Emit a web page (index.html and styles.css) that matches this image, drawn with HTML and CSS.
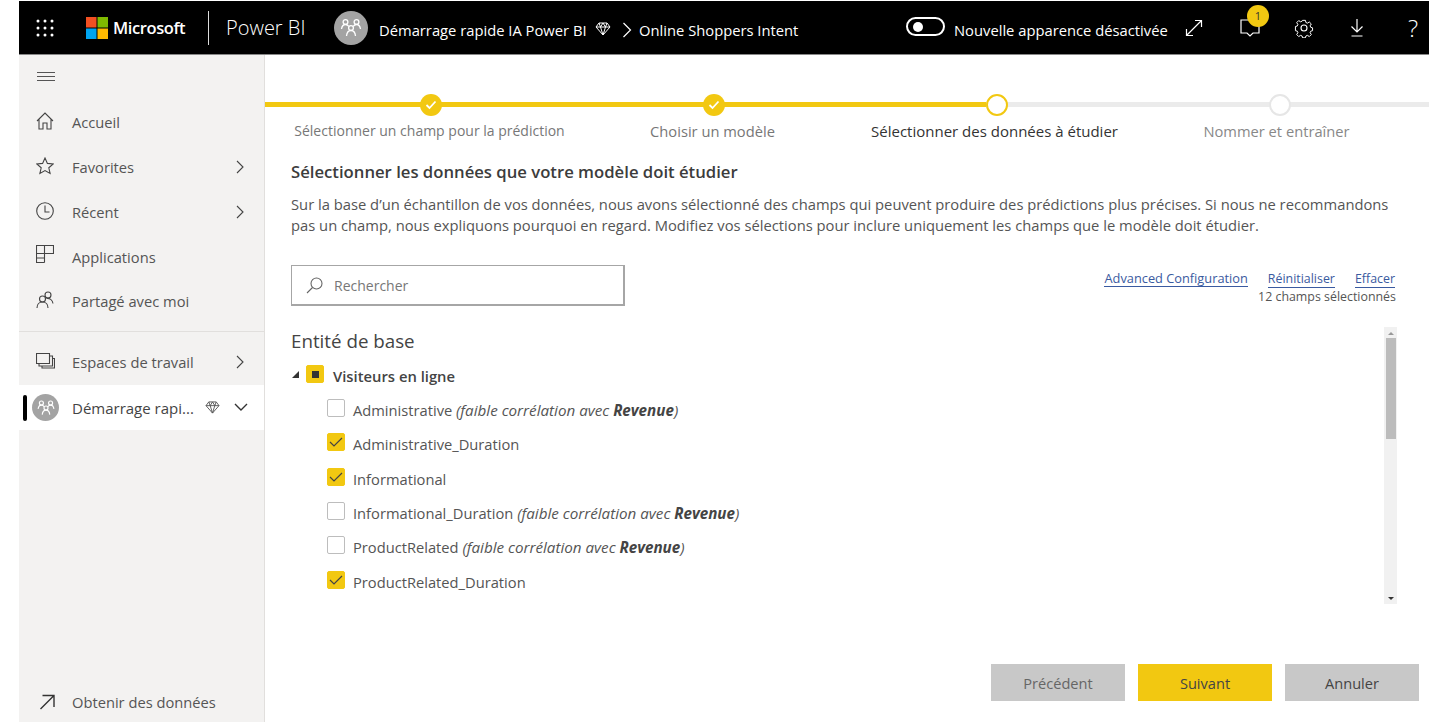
FILE: index.html
```html
<!DOCTYPE html>
<html lang="fr">
<head>
<meta charset="utf-8">
<title>Power BI</title>
<link rel="stylesheet" href="styles.css">
</head>
<body>
<div class="app">
  <header class="topbar">
    <svg class="waffle" width="18" height="18" viewBox="0 0 18 18" fill="#fff"><circle cx="2" cy="2" r="1.5"/><circle cx="9" cy="2" r="1.5"/><circle cx="16" cy="2" r="1.5"/><circle cx="2" cy="9" r="1.5"/><circle cx="9" cy="9" r="1.5"/><circle cx="16" cy="9" r="1.5"/><circle cx="2" cy="16" r="1.5"/><circle cx="9" cy="16" r="1.5"/><circle cx="16" cy="16" r="1.5"/></svg>
    <svg class="mslogo" width="22" height="22" viewBox="0 0 22 22"><rect width="10.5" height="10.5" fill="#f25022"/><rect x="11.5" width="10.5" height="10.5" fill="#7fba00"/><rect y="11.5" width="10.5" height="10.5" fill="#00a4ef"/><rect x="11.5" y="11.5" width="10.5" height="10.5" fill="#ffb900"/></svg>
    <span class="msname">Microsoft</span>
    <span class="tsep"></span>
    <span class="pbi">Power BI</span>
    <span class="avatar big">
      <svg width="24" height="24" viewBox="0 0 24 24" fill="none" stroke="#fff" stroke-width="1.3"><circle cx="6.5" cy="6" r="2.4"/><circle cx="17.5" cy="6" r="2.4"/><circle cx="12" cy="12" r="2.4"/><path d="M2.5 13c.5-3 2-4.500 4-4.500 1.500 0 2.500.7 3.300 2M21.500 13c-.5-3-2-4.500-4-4.500-1.500 0-2.500.7-3.300 2M7.500 20c.3-3 2-5.500 4.500-5.500s4.200 2.500 4.500 5.500"/></svg>
    </span>
    <span class="crumb c1">Démarrage rapide IA Power BI</span>
    <svg class="dia" width="16" height="14" viewBox="0 0 16 14" fill="none" stroke="#fff" stroke-width="1"><path d="M4 1h8l3 4-7 8-7-8zM1 5h14M5.500 5L8 13l2.500-8M4 1l1.500 4L8 1l2.500 4L12 1"/></svg>
    <svg class="crumbchev" width="10" height="16" viewBox="0 0 10 16" fill="none" stroke="#fff" stroke-width="1.2"><path d="M1.500 1l7 7-7 7"/></svg>
    <span class="crumb c2">Online Shoppers Intent</span>
    <span class="toggle"><span class="knob"></span></span>
    <span class="crumb c3">Nouvelle apparence désactivée</span>
    <svg class="ic-expand" width="18" height="18" viewBox="0 0 18 18" fill="none" stroke="#fff" stroke-width="1.2"><path d="M1.500 16.500L16.500 1.500M10 1.500h6.500V8M1.500 10v6.500H8"/></svg>
    <span class="comment">
      <svg width="20" height="20" viewBox="0 0 20 20" fill="none" stroke="#fff" stroke-width="1.2"><path d="M1 2h18v13h-6l-3 3-3-3H1z"/></svg>
      <span class="badge">1</span>
    </span>
    <svg class="ic-gear" width="20" height="20" viewBox="0 0 20 20" fill="none" stroke="#fff" stroke-width="1.1"><circle cx="10" cy="10" r="3"/><path d="M8.400 1.500h3.200l.5 2.400 1.700.7 2.100-1.300 2.200 2.200-1.300 2.100.7 1.700 2 .5v3.200l-2 .5-.7 1.700 1.300 2.100-2.200 2.200-2.100-1.300-1.700.7-.5 2h-3.200l-.5-2-1.700-.7-2.100 1.300-2.200-2.200 1.300-2.100-.7-1.700-2-.5V8.300l2-.5.7-1.700-1.300-2.100 2.200-2.200 2.100 1.300 1.700-.7z" transform="translate(1 1) scale(.9)"/></svg>
    <svg class="ic-down" width="14" height="18" viewBox="0 0 14 18" fill="none" stroke="#fff" stroke-width="1.2"><path d="M7 0v13M1.500 7.500L7 13l5.500-5.500M1.500 17h11"/></svg>
    <span class="help">?</span>
  </header>

  <div class="body">
    <nav class="sidebar">
      <svg class="burger" width="18" height="10" viewBox="0 0 18 10" stroke="#555" stroke-width="1"><path d="M0 .5h18M0 4.500h18M0 8.500h18"/></svg>
      <ul class="navlist">
        <li class="navitem"><svg class="navic" width="18" height="18" viewBox="0 0 18 18" fill="none" stroke="#444" stroke-width="1.1"><path d="M1 9l8-8 8 8M3 7.500V17h4v-6h4v6h4V7.500"/></svg><span>Accueil</span></li>
        <li class="navitem"><svg class="navic" width="18" height="18" viewBox="0 0 18 18" fill="none" stroke="#444" stroke-width="1.1"><path d="M9 1l2.400 5.400 5.800.6-4.400 3.800 1.300 5.700L9 13.600l-5.100 2.900 1.300-5.700L.8 7l5.800-.6z"/></svg><span>Favorites</span><svg class="chev" width="8" height="14" viewBox="0 0 8 14" fill="none" stroke="#444" stroke-width="1.1"><path d="M1 1l6 6-6 6"/></svg></li>
        <li class="navitem"><svg class="navic" width="18" height="18" viewBox="0 0 18 18" fill="none" stroke="#444" stroke-width="1.1"><circle cx="9" cy="9" r="8.300"/><path d="M9 3.500V10h4.500"/></svg><span>Récent</span><svg class="chev" width="8" height="14" viewBox="0 0 8 14" fill="none" stroke="#444" stroke-width="1.1"><path d="M1 1l6 6-6 6"/></svg></li>
        <li class="navitem"><svg class="navic up" width="18" height="18" viewBox="0 0 18 18" fill="none" stroke="#444" stroke-width="1.1"><path d="M.5.500h17v8H.5zM8.500.500v8M.5 8.500v9h8M.5 13h8M8.500 8.500v9"/></svg><span>Applications</span></li>
        <li class="navitem"><svg class="navic" width="18" height="18" viewBox="0 0 18 18" fill="none" stroke="#444" stroke-width="1.1"><circle cx="12" cy="4" r="3"/><circle cx="6.500" cy="8" r="3"/><path d="M1 17c0-3.500 2.200-6 5.500-6s5.500 2.500 5.500 6M10.500 7.500c3-.6 6 1.300 6.500 5"/></svg><span>Partagé avec moi</span></li>
      </ul>
      <div class="navsep"></div>
      <div class="navitem ws"><svg class="navic" width="19" height="16" viewBox="0 0 19 16" fill="none" stroke="#444" stroke-width="1.1"><path d="M.5.500h13v10H.5zM14 3h2.500v10H3v-2.500M17 5.500h1.500v9.500H6v-2"/></svg><span>Espaces de travail</span><svg class="chev" width="8" height="14" viewBox="0 0 8 14" fill="none" stroke="#444" stroke-width="1.1"><path d="M1 1l6 6-6 6"/></svg></div>
      <div class="current">
        <span class="marker"></span>
        <span class="avatar small"><svg width="20" height="20" viewBox="0 0 24 24" fill="none" stroke="#fff" stroke-width="1.4"><circle cx="6.500" cy="6" r="2.400"/><circle cx="17.500" cy="6" r="2.400"/><circle cx="12" cy="12" r="2.400"/><path d="M2.500 13c.5-3 2-4.500 4-4.500 1.500 0 2.500.7 3.300 2M21.500 13c-.5-3-2-4.500-4-4.500-1.500 0-2.500.7-3.300 2M7.500 20c.3-3 2-5.500 4.500-5.500s4.200 2.500 4.500 5.500"/></svg></span>
        <span class="curname">Démarrage rapi...</span>
        <svg class="curdia" width="15" height="13" viewBox="0 0 16 14" fill="none" stroke="#555" stroke-width="1"><path d="M4 1h8l3 4-7 8-7-8zM1 5h14M5.500 5L8 13l2.500-8M4 1l1.500 4L8 1l2.500 4L12 1"/></svg>
        <svg class="curchev" width="14" height="9" viewBox="0 0 14 9" fill="none" stroke="#333" stroke-width="1.4"><path d="M1 1l6 6 6-6"/></svg>
      </div>
      <div class="navitem getdata"><svg class="navic" width="16" height="16" viewBox="0 0 16 16" fill="none" stroke="#333" stroke-width="1.4"><path d="M1.500 15L14.500 2M3.500 1.500h11.500V13"/></svg><span>Obtenir des données</span></div>
    </nav>

    <main class="main">
      <div class="stepper">
        <div class="step done"><span class="dot"><svg width="12" height="10" viewBox="0 0 12 10" fill="none" stroke="#fff" stroke-width="1.800"><path d="M1.500 5l3 3 6-6.500"/></svg></span><span class="steplabel first">Sélectionner un champ pour la prédiction</span></div>
        <div class="step done"><span class="dot"><svg width="12" height="10" viewBox="0 0 12 10" fill="none" stroke="#fff" stroke-width="1.800"><path d="M1.500 5l3 3 6-6.500"/></svg></span><span class="steplabel">Choisir un modèle</span></div>
        <div class="step active"><span class="dot"></span><span class="steplabel">Sélectionner des données à étudier</span></div>
        <div class="step todo"><span class="dot"></span><span class="steplabel">Nommer et entraîner</span></div>
      </div>

      <section class="content">
        <h1 class="title">Sélectionner les données que votre modèle doit étudier</h1>
        <p class="intro">Sur la base d’un échantillon de vos données, nous avons sélectionné des champs qui peuvent produire des prédictions plus précises. Si nous ne recommandons pas un champ, nous expliquons pourquoi en regard. Modifiez vos sélections pour inclure uniquement les champs que le modèle doit étudier.</p>

        <div class="tools">
          <div class="search">
            <svg width="17" height="17" viewBox="0 0 17 17" fill="none" stroke="#666" stroke-width="1.1"><circle cx="10.500" cy="6.500" r="5.500"/><path d="M6.500 10.500L1 16"/></svg>
            <span>Rechercher</span>
          </div>
          <div class="actions">
            <div class="links"><a href="#">Advanced Configuration</a><a href="#">Réinitialiser</a><a href="#">Effacer</a></div>
            <div class="count">12 champs sélectionnés</div>
          </div>
        </div>

        <div class="listwrap">
          <div class="list">
            <h2 class="entity">Entité de base</h2>
            <div class="root">
              <span class="tri"></span>
              <span class="box partial"><span class="sq"></span></span>
              <span class="rootname">Visiteurs en ligne</span>
            </div>
            <ul class="fields">
              <li class="field"><span class="box"></span><span>Administrative <em>(faible corrélation avec <b>Revenue</b>)</em></span></li>
              <li class="field"><span class="box on"><svg width="14" height="12" viewBox="0 0 14 12" fill="none" stroke="#444" stroke-width="1.200"><path d="M1 6l4 4 8-8"/></svg></span><span>Administrative_Duration</span></li>
              <li class="field"><span class="box on"><svg width="14" height="12" viewBox="0 0 14 12" fill="none" stroke="#444" stroke-width="1.200"><path d="M1 6l4 4 8-8"/></svg></span><span>Informational</span></li>
              <li class="field"><span class="box"></span><span>Informational_Duration <em>(faible corrélation avec <b>Revenue</b>)</em></span></li>
              <li class="field"><span class="box"></span><span>ProductRelated <em>(faible corrélation avec <b>Revenue</b>)</em></span></li>
              <li class="field"><span class="box on"><svg width="14" height="12" viewBox="0 0 14 12" fill="none" stroke="#444" stroke-width="1.200"><path d="M1 6l4 4 8-8"/></svg></span><span>ProductRelated_Duration</span></li>
            </ul>
          </div>
          <div class="scroll">
            <span class="arrow up"></span>
            <span class="thumb"></span>
            <span class="arrow down"></span>
          </div>
        </div>
      </section>

      <footer class="footer">
        <button class="btn prev">Précédent</button>
        <button class="btn next">Suivant</button>
        <button class="btn cancel">Annuler</button>
      </footer>
    </main>
  </div>
</div>
</body>
</html>
```

FILE: styles.css
```css
* { box-sizing: border-box; }
html, body { margin: 0; height: 100%; background: #fff; overflow: hidden; }
body { font-family: "Open Sans", "Noto Sans", sans-serif; font-size: 14px; color: #444; }
ul { list-style: none; margin: 0; padding: 0; }

.app { margin: 1px 0 0 19px; height: 721px; display: flex; flex-direction: column; }

.topbar { height: 54px; flex: none; background: #000; border-bottom: 1px solid #888; color: #fff; display: flex; align-items: center; }
.waffle { margin-left: 17px; }
.mslogo { margin-left: 32px; }
.msname { margin-left: 5px; width: 76px; font-size: 16.500px; font-weight: 600; letter-spacing: -.4px; white-space: nowrap; }
.tsep { width: 1px; height: 34px; background: #ddd; margin-left: 19px; }
.pbi { margin-left: 17px; width: 91px; font-size: 20px; font-weight: 300; white-space: nowrap; }
.avatar { border-radius: 50%; background: #a3a3a3; display: flex; align-items: center; justify-content: center; flex: none; }
.avatar.big { width: 34px; height: 34px; margin-left: 17px; }
.avatar.small { width: 27px; height: 27px; }
.crumb { font-size: 14.750px; white-space: nowrap; position: relative; top: 2px; }
.c1 { margin-left: 11px; width: 208px; }
.dia { margin-left: 8px; position: relative; top: 1px; }
.crumbchev { margin-left: 11px; position: relative; top: 2px; }
.c2 { margin-left: 7px; width: 160px; }
.toggle { margin-left: 107px; width: 39px; height: 19px; border: 2px solid #fff; border-radius: 10px; display: flex; align-items: center; padding-left: 5px; position: relative; top: -1px; }
.knob { width: 10px; height: 10px; border-radius: 50%; background: #fff; }
.c3 { margin-left: 9px; width: 215px; }
.ic-expand { margin-left: 16px; }
.comment { margin-left: 37px; position: relative; width: 20px; height: 20px; }
.badge { position: absolute; left: 0; top: -13px; margin-left: -4px; transform: translateX(11px); width: 22px; height: 22px; border-radius: 50%; background: #f2c811; color: #333; font-size: 11px; display: flex; align-items: center; justify-content: center; }
.ic-gear { margin-left: 34px; }
.ic-down { margin-left: 36px; }
.help { margin-left: 44px; font-size: 24px; line-height: 24px; font-weight: 300; }

.body { flex: 1; display: flex; min-height: 0; }

.sidebar { width: 246px; flex: none; background: #f3f2f1; border-right: 1px solid #e1dfdd; display: flex; flex-direction: column; }
.burger { margin: 17px 0 0 18px; flex: none; }
.navlist { margin-top: 17px; }
.navitem { height: 45px; display: flex; align-items: center; padding-left: 17px; position: relative; font-size: 14.700px; color: #555; }
.navlist .navitem:last-child { height: 44px; }
.navitem > span { position: absolute; left: 53px; white-space: nowrap; }
.navic { flex: none; position: relative; top: -1px; }
.navic.up { top: -3px; }
.chev { position: absolute; left: 217px; }
.navsep { height: 1px; background: #e1dfdd; margin-top: 8px; flex: none; }
.ws { margin-top: 7px; }
.current { height: 45px; background: #fff; position: relative; display: flex; align-items: center; padding-left: 13px; width: 245px; margin-top: 1px; }
.marker { position: absolute; left: 4px; top: 10px; width: 4px; height: 26px; border-radius: 2px; background: #000; }
.curname { margin-left: 13px; color: #444; white-space: nowrap; width: 125px; font-size: 15px; }
.curdia { margin-left: 8px; }
.curchev { margin-left: 14px; }
.getdata { margin-top: auto; height: 40px; padding-left: 20px; }
.getdata .navic { top: 0; }

.main { flex: 1; min-width: 0; display: flex; flex-direction: column; }

.stepper { display: grid; grid-template-columns: repeat(4, 283px); padding: 39px 0 0 23px; height: 90px; flex: none; position: relative; }
.stepper::before { content: ""; position: absolute; left: 0; right: 0; top: 47px; height: 5px; background: #ebebeb; }
.stepper::after { content: ""; position: absolute; left: 0; width: 721px; top: 47px; height: 5px; background: #f2c811; }
.step { display: flex; flex-direction: column; align-items: center; position: relative; z-index: 1; }
.dot { width: 22px; height: 22px; border-radius: 50%; display: flex; align-items: center; justify-content: center; background: #f2c811; margin-left: 3px; }
.step.active .dot { background: #fff; border: 2px solid #f2c811; }
.step.todo .dot { background: #fff; border: 2px solid #e6e6e6; }
.steplabel { margin-top: 5px; font-size: 14.700px; color: #777; white-space: nowrap; }
.steplabel.first { font-size: 14px; }
.step.active .steplabel { color: #333; font-size: 15px; margin-right: 2px; }
.step.todo .steplabel { color: #888; margin-right: 4px; }

.content { padding: 0 32px 0 26px; flex: none; }
.title { margin: 16px 0 0; font-size: 16.700px; line-height: 22px; font-weight: 600; color: #3c3c3c; }
.intro { margin: 11px 0 0; font-size: 14.750px; line-height: 21px; color: #555; width: 1105px; }

.tools { display: flex; justify-content: space-between; align-items: flex-start; margin-top: 29px; }
.search { width: 334px; height: 41px; border: 1px solid #a6a6a6; border-bottom-width: 2px; border-right-width: 2px; display: flex; align-items: center; padding-left: 14px; gap: 11px; color: #777; font-size: 14px; }
.actions { text-align: right; line-height: 18px; margin-top: 5px; }
.links { display: flex; justify-content: flex-end; align-items: baseline; gap: 20px; padding-right: 2px; font-size: 12.400px; }
.links a { color: #3a5aa0; text-decoration: none; border-bottom: 1px solid #3a5aa0; line-height: 16px; }
.links a:first-child { font-size: 12.800px; }
.count { color: #555; font-size: 12.400px; margin-top: 0; padding-right: 1px; }

.listwrap { display: flex; justify-content: space-between; margin-top: 21px; height: 277px; }
.list { flex: 1; }
.entity { margin: 0; padding-top: 1px; font-size: 18.750px; line-height: 26px; font-weight: 400; color: #444; }
.root { height: 34px; display: flex; align-items: center; margin-top: 5px; }
.tri { width: 0; height: 0; border-style: solid; border-width: 0 0 7px 7px; border-color: transparent transparent #333 transparent; margin-right: 7px; margin-left: 1px; position: relative; top: -2px; }
.rootname { margin-left: 9px; font-weight: 600; font-size: 14.800px; color: #444; }
.box { width: 18px; height: 18px; border: 1px solid #bdbdbd; border-radius: 2px; background: #fff; display: flex; align-items: center; justify-content: center; flex: none; position: relative; top: -2px; }
.box.on, .box.partial { background: #f2c811; border-color: #f2c811; }
.sq { width: 7px; height: 7px; background: #333; }
.fields { padding-left: 36px; }
.field { height: 34.300px; display: flex; align-items: center; gap: 8px; color: #555; font-size: 14.700px; white-space: nowrap; }
.field em { font-size: 15.200px; }
.field em b { color: #444; }

.scroll { width: 13px; height: 277px; background: #f1f1f1; display: flex; flex-direction: column; align-items: center; flex: none; }
.thumb { width: 10px; height: 101px; background: #bcbcbc; margin-top: 3px; }
.arrow { width: 0; height: 0; border-style: solid; }
.arrow.up { border-width: 0 3px 3px 3px; border-color: transparent transparent #999 transparent; margin-top: 5px; }
.arrow.down { border-width: 3px 3px 0 3px; border-color: #333 transparent transparent transparent; margin-top: auto; margin-bottom: 4px; }

.footer { margin-top: auto; display: flex; justify-content: flex-end; gap: 13px; padding: 0 10px 21px 0; }
.btn { width: 134px; height: 37px; border: 0; font: inherit; font-size: 14.600px; color: #444; background: #c8c8c8; }
.btn.prev { color: #666; }
.btn.next { background: #f2c811; }
```
